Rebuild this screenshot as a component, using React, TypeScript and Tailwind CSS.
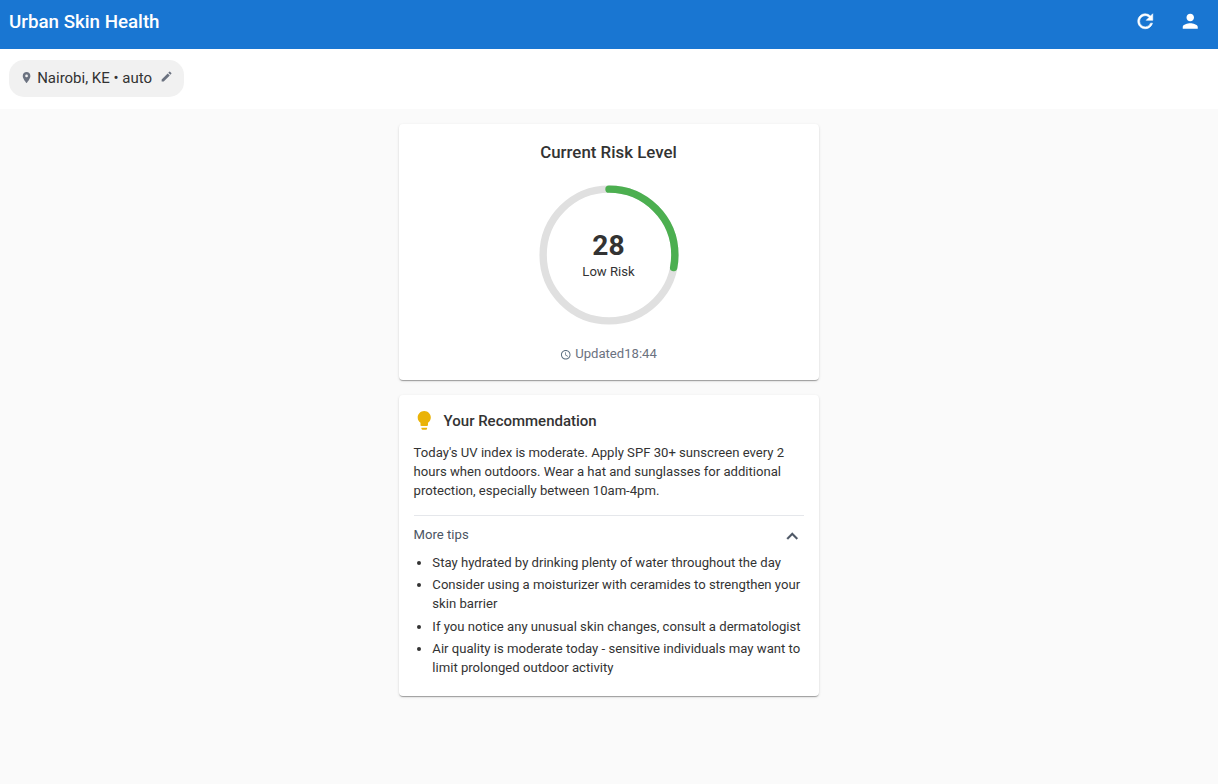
import React from 'react';
import { MdPerson, MdPlace, MdEdit, MdAccessTime, MdLightbulb } from 'react-icons/md';

const CARD =
  'w-[420px] rounded-[4px] bg-white shadow-[0_2px_1px_-1px_rgba(0,0,0,0.2),0_1px_1px_0_rgba(0,0,0,0.14),0_1px_3px_0_rgba(0,0,0,0.12)]';

const TIPS = [
  'Stay hydrated by drinking plenty of water throughout the day',
  'Consider using a moisturizer with ceramides to strengthen your skin barrier',
  'If you notice any unusual skin changes, consult a dermatologist',
  'Air quality is moderate today - sensitive individuals may want to limit prolonged outdoor activity',
];

function RefreshIcon() {
  return (
    <svg
      viewBox="0 0 24 24"
      className="h-[22.5px] w-[22.5px] fill-current stroke-current stroke-[0.6]"
    >
      <path d="M17.65 6.35A7.958 7.958 0 0012 4c-4.42 0-7.99 3.58-7.99 8s3.57 8 7.99 8c3.73 0 6.84-2.55 7.73-6h-2.08A5.99 5.99 0 0112 18c-3.31 0-6-2.69-6-6s2.69-6 6-6c1.66 0 3.14.69 4.22 1.78L13 11h7V4l-2.35 2.35z" />
    </svg>
  );
}

function ChevronUpIcon() {
  return (
    <svg
      viewBox="0 0 24 24"
      className="h-[22.5px] w-[22.5px] fill-current stroke-current stroke-[0.3]"
    >
      <path d="M12 8l-6 6 1.41 1.41L12 10.83l4.59 4.58L18 14z" />
    </svg>
  );
}

function Header() {
  return (
    <header className="flex h-[49px] items-start justify-between bg-[#1976d2] pr-[17px] pl-[9px] text-white">
      <h1 className="mt-[7px] text-[18.75px] leading-[30px] font-medium">Urban Skin Health</h1>
      <div className="mt-[10px] flex gap-[22.5px]">
        <button aria-label="Refresh">
          <RefreshIcon />
        </button>
        <button aria-label="Profile">
          <MdPerson size={22.5} />
        </button>
      </div>
    </header>
  );
}

function RiskGauge({ value }: { value: number }) {
  const radius = 44.5;
  const length = 2 * Math.PI * radius;
  return (
    <div className="mt-[15px] grid h-[150px] w-[150px] place-items-center">
      <svg viewBox="0 0 100 100" className="col-start-1 row-start-1 h-[148px] w-[148px] -rotate-90">
        <circle cx="50" cy="50" r={radius} fill="none" stroke="#e0e0e0" strokeWidth="5" />
        <circle
          cx="50"
          cy="50"
          r={radius}
          fill="none"
          stroke="#4caf50"
          strokeWidth="5"
          strokeLinecap="round"
          strokeDasharray={`${(length * value) / 100} ${length}`}
        />
      </svg>
      <div className="col-start-1 row-start-1 flex flex-col items-center pr-px">
        <span className="text-[28.125px] leading-[33px] font-bold">{value}</span>
        <span className="text-[13.125px] leading-[19px]">Low Risk</span>
      </div>
    </div>
  );
}

export default function App() {
  return (
    <div className="min-h-screen bg-[#fafafa] font-['Roboto',sans-serif] text-[#333333]">
      <Header />
      <div className="h-[60px] bg-white pt-[11px] pl-[9px]">
        <div className="flex h-[37px] w-[175px] items-center rounded-[15px] bg-[#f1f1f1] pb-[2px] pl-[11px]">
          <MdPlace size={13.125} className="text-[#6b7280]" />
          <span className="ml-[4px] text-[15px] leading-[22px]">Nairobi, KE • auto</span>
          <MdEdit size={13.125} className="mb-[1px] ml-[7.5px] text-[#6b7280]" />
        </div>
      </div>
      <main className="flex flex-col items-center gap-[15px] pt-[15px]">
        <section className={`${CARD} flex h-[256px] flex-col items-center pt-[15px]`}>
          <h2 className="pr-px text-[16.875px] leading-[26px] font-medium">Current Risk Level</h2>
          <RiskGauge value={28} />
          <div className="mt-[14px] flex items-center gap-[3.5px] pr-[1px] text-[13.125px] leading-[19px] text-[#6b7280]">
            <MdAccessTime size={11.5} className="mt-[2px] text-[#5c7080]" />
            <span>Updated18:44</span>
          </div>
        </section>
        <section className={`${CARD} h-[301px] pt-[14px] pr-[15.5px] pl-[14.6px]`}>
          <div className="flex h-[24px] items-center">
            <MdLightbulb size={22.5} className="mb-[1.5px] -ml-[0.5px] text-[#eab308]" />
            <h2 className="ml-[8px] text-[15px] leading-[24px] font-medium">Your Recommendation</h2>
          </div>
          <p className="mt-[10px] text-[13.125px] leading-[19px]">
            Today's UV index is moderate. Apply SPF 30+ sunscreen every 2 hours when outdoors. Wear a
            hat and sunglasses for additional protection, especially between 10am-4pm.
          </p>
          <div className="mt-[15px] border-t border-[#e5e7eb] pt-[9px]">
            <button className="flex h-[22px] w-full items-start justify-between text-[#4b5563]">
              <span className="text-[13.125px] leading-[19px]">More tips</span>
              <ChevronUpIcon />
            </button>
            <ul className="mt-[6px] list-disc space-y-[3.3px] pl-[18.75px] text-[13.125px] leading-[19px]">
              {TIPS.map((tip) => (
                <li key={tip}>{tip}</li>
              ))}
            </ul>
          </div>
        </section>
      </main>
    </div>
  );
}
